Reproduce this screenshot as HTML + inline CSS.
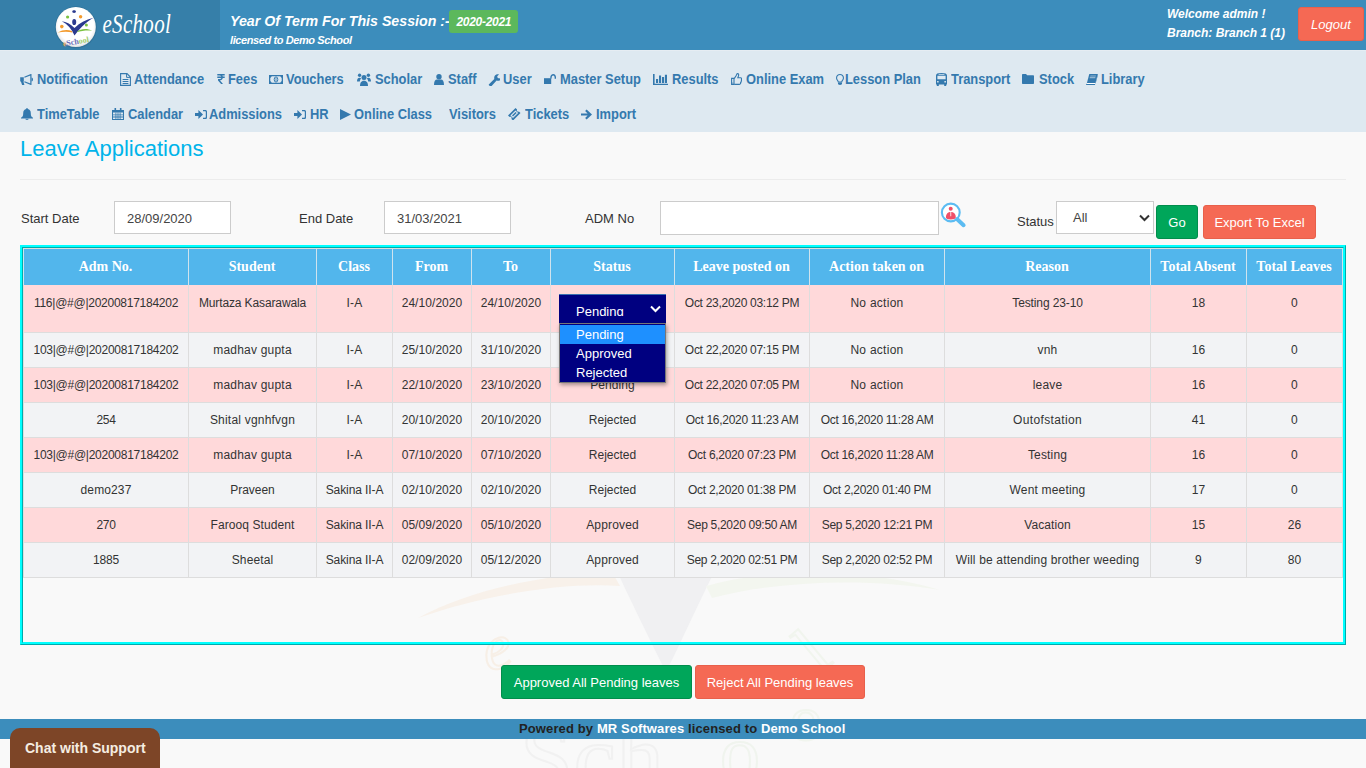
<!DOCTYPE html>
<html><head><meta charset="utf-8">
<style>
*{box-sizing:border-box;margin:0;padding:0}
html,body{width:1366px;height:768px;overflow:hidden;background:#f9f9f9;font-family:"Liberation Sans",sans-serif;color:#333}
.abs{position:absolute}
.ic{position:absolute}
.nv{position:absolute;font-size:14px;font-weight:bold;color:#3479ae;white-space:nowrap;line-height:16px;transform:scaleX(0.92);transform-origin:0 0}
.wt{position:absolute;color:#fff;font-style:italic;font-weight:bold;white-space:nowrap}
.lbl{position:absolute;font-size:13px;color:#333;white-space:nowrap;line-height:16px}
.inp{position:absolute;background:#fff;border:1px solid #ccc}
.inp span{position:absolute;font-size:13px;line-height:16px;color:#444}
.btn{position:absolute;color:#fff;font-size:13px;text-align:center;border-radius:3px;white-space:nowrap}
.hrow .th{position:absolute;top:0;height:36px;line-height:36px;background:#52b6ec;color:#fff;font-family:"Liberation Serif",serif;font-weight:bold;font-size:14px;text-align:center;white-space:nowrap}
.td{position:absolute;font-size:12px;letter-spacing:-0.2px;line-height:18px;padding-top:8px;text-align:center;white-space:nowrap;color:#333}
</style></head><body>
<div class="abs" style="left:0;top:0;width:220px;height:50px;background:#367fa9"></div>
<div class="abs" style="left:220px;top:0;width:1146px;height:50px;background:#3c8dbc"></div>
<svg class="ic" style="left:52px;top:3px;width:48px;height:48px" viewBox="0 0 48 48">
<defs><radialGradient id="lg" cx="0.5" cy="0.45" r="0.55"><stop offset="0.8" stop-color="#ffffff"/><stop offset="1" stop-color="#e4e4e4"/></radialGradient></defs>
<circle cx="23.9" cy="24.3" r="21" fill="#1f4f6e" opacity="0.25"/>
<circle cx="23.8" cy="24" r="20" fill="url(#lg)"/>
<path d="M20.3 8.3c0.4-1.3 3.2-1.3 3.6 0 0.2 0.9-0.6 1.7-1.8 1.7s-2-0.8-1.8-1.7z" fill="#2b3a8f"/>
<ellipse cx="22.2" cy="19" rx="2" ry="3.1" fill="#2b3a8f"/>
<path d="M9.8 18.2c4.5 0.5 8.5 2.5 12.7 6.8 5-5 11-8.5 19-10.3-5.5 3.2-12 8.2-19 17.8-2.7-6.6-7-11.2-12.7-14.3z" fill="#2b3a8f"/>
<circle cx="15.6" cy="14" r="1.6" fill="#7cc242"/>
<circle cx="28.6" cy="13.8" r="1.7" fill="#f39a2c"/>
<circle cx="9.8" cy="23.6" r="1.8" fill="#f39a2c"/>
<circle cx="34.4" cy="22" r="1.5" fill="#7cc242"/>
<path d="M5.8 29.6c4.5-2.8 9.5-3.2 14-1.6l0.8 1.6c-5-1.2-10-0.8-14.8 0z" fill="#f39a2c"/>
<path d="M24.5 29.2c4-3.5 10-4.2 15.8-1.6-5.5-0.6-10.5 0.1-15.8 1.6z" fill="#7cc242"/>
<text x="10.5" y="41.5" font-family="Liberation Serif" font-weight="bold" font-size="8" fill="#e8a860" transform="rotate(-10 22 38)">e<tspan fill="#6a6cb8">Sch</tspan><tspan fill="#9ccc6a">ool</tspan></text>
</svg>
<div class="abs" style="left:102.5px;top:5px;font-family:'Liberation Serif',serif;font-style:italic;font-size:21px;color:#fff;line-height:30px;white-space:nowrap;transform:scaleY(1.25);transform-origin:0 0;letter-spacing:0.3px">eSchool</div>
<div class="wt" style="left:230px;top:12px;font-size:14.2px;line-height:18px">Year Of Term For This Session :-</div>
<div class="abs" style="left:449px;top:10px;width:69px;height:23px;background:#5cb85c;border-radius:3px"></div>
<div class="wt" style="left:456.5px;top:14px;font-size:12px;line-height:16px;letter-spacing:-0.3px">2020-2021</div>
<div class="wt" style="left:230px;top:33px;font-size:11px;line-height:14px;letter-spacing:-0.4px">licensed to Demo School</div>
<div class="wt" style="left:1167px;top:5.5px;font-size:12px;line-height:16px">Welcome admin !</div>
<div class="wt" style="left:1167px;top:25px;font-size:12px;line-height:16px">Branch: Branch 1 (1)</div>
<div class="abs" style="left:1298px;top:7px;width:66px;height:34px;background:#f56954;border:1px solid #e8604b;border-radius:3px"></div>
<div class="abs" style="left:1311px;top:17px;font-size:13px;font-style:italic;color:#fff;line-height:16px">Logout</div>
<div class="abs" style="left:0;top:50px;width:1366px;height:82px;background:#dee9f1;border-top:1px solid #e6edf3"></div>
<div class="nv" style="left:37.1px;top:71px">Notification</div><svg class="ic" style="left:19.8px;top:74px;width:13px;height:11px" viewBox="0 0 13 11" fill="#3479ae"><path d="M0.2 3.2h3.6v4.4H3.4l1 3.4H2.1L0.9 7.6H0.2z"/><path d="M4.4 3.2L10.9 0.6v9.8L4.4 7.8" fill="none" stroke="#3479ae" stroke-width="1.2"/><path d="M11.5 3.5c0.9 0 1.5 0.9 1.5 2s-0.6 2-1.5 2z"/></svg><div class="nv" style="left:134.1px;top:71px">Attendance</div><svg class="ic" style="left:120px;top:73px;width:11px;height:13px" viewBox="0 0 11 13" fill="#3479ae"><path d="M0.6 0.6h6.4l3.4 3.4v8.4H0.6z" fill="none" stroke="#3479ae" stroke-width="1.1"/><path d="M6.6 0.8v3.6h3.6" fill="none" stroke="#3479ae" stroke-width="1"/><path d="M2.6 6h5.8v0.9H2.6zM2.6 8h5.8v0.9H2.6zM2.6 10h5.8v0.9H2.6z"/></svg><div class="nv" style="left:227.5px;top:71px">Fees</div><svg class="ic" style="left:216.5px;top:74px;width:8px;height:10px" viewBox="0 0 8 10" fill="#3479ae"><path d="M0.3 0h7.4v1.4H5.2c0.3 0.3 0.5 0.7 0.6 1.1h1.9v1.4H5.8C5.5 5.4 4.3 6.2 2.8 6.3L6 10H4.1L1 6.4V5.1h1.6c0.9 0 1.5-0.5 1.7-1.2H0.3V2.5h4C4 1.8 3.4 1.4 2.6 1.4H0.3z"/></svg><div class="nv" style="left:286.3px;top:71px">Vouchers</div><svg class="ic" style="left:269px;top:75px;width:14px;height:9px" viewBox="0 0 14 9" fill="#3479ae"><path d="M0 0h14v9H0z M2.8 1.3h8.4l1.5 1.7v3l-1.5 1.7H2.8L1.3 6V3z" fill-rule="evenodd"/><ellipse cx="7" cy="4.5" rx="1.8" ry="2.6" fill="none" stroke="#3479ae" stroke-width="1"/><path d="M6.6 3h0.8v3h-0.8z"/></svg><div class="nv" style="left:374.7px;top:71px">Scholar</div><svg class="ic" style="left:356.6px;top:73px;width:14px;height:13px" viewBox="0 0 14 13" fill="#3479ae"><circle cx="7" cy="4.6" r="2.5"/><circle cx="2.6" cy="2.3" r="1.7"/><circle cx="11.4" cy="2.3" r="1.7"/><path d="M3 13c0-3 1-5.3 4-5.3s4 2.3 4 5.3z"/><path d="M0 8.5c0-2.5 0.8-3.8 2.6-3.8 0.7 0 1.2 0.3 1.5 0.5C3.4 6.1 2.9 7.2 2.8 8.6z"/><path d="M14 8.5c0-2.5-0.8-3.8-2.6-3.8-0.7 0-1.2 0.3-1.5 0.5 0.7 0.9 1.2 2 1.3 3.4z"/></svg><div class="nv" style="left:447.7px;top:71px">Staff</div><svg class="ic" style="left:433.8px;top:74px;width:10px;height:11px" viewBox="0 0 10 11" fill="#3479ae"><circle cx="5" cy="2.8" r="2.7"/><path d="M0 11c0-3.6 1.3-5.4 3-5.4h4c1.7 0 3 1.8 3 5.4z"/></svg><div class="nv" style="left:503.3px;top:71px">User</div><svg class="ic" style="left:487.7px;top:74px;width:12px;height:12px" viewBox="0 0 12 12" fill="#3479ae"><path d="M1 10.2L6.3 5c-0.4-1.6 0.2-3.4 1.7-4.2 0.9-0.5 2-0.6 3-0.3L9.2 2.3l0.5 1.8 1.8 0.5 1.8-1.8c0.3 1-0.1 2.2-0.9 3-0.9 0.9-2.4 1.3-3.8 0.8L3.6 11.9c-0.7 0.5-1.7 0.4-2.3-0.3-0.6-0.4-0.7-1-0.3-1.4z"/></svg><div class="nv" style="left:559.7px;top:71px">Master Setup</div><svg class="ic" style="left:544px;top:74px;width:12px;height:10px" viewBox="0 0 12 10" fill="#3479ae"><path d="M0 4.2h7.2V10H0z"/><path d="M6.3 4.6V3.2C6.3 1.4 7.7 0 9.3 0S12 1.4 12 3.2v1.6h-1.4V3.2c0-0.9-0.6-1.8-1.4-1.8S7.7 2.3 7.7 3.2v1.4z"/></svg><div class="nv" style="left:672.2px;top:71px">Results</div><svg class="ic" style="left:653px;top:74px;width:15px;height:11px" viewBox="0 0 15 11" fill="#3479ae"><path d="M0 0h1.6v9.7H15V11H0z"/><path d="M3 4.9h2.1v4H3zM6 1.6h2.1v7.3H6zM9 3h2.1v5.9H9zM11.9 0.8h2.1v8.1h-2.1z"/></svg><div class="nv" style="left:745.7px;top:71px">Online Exam</div><svg class="ic" style="left:730.7px;top:73px;width:11px;height:12px" viewBox="0 0 11 12" fill="#3479ae"><path d="M0.6 5.4h2.4v6H0.6z" fill="none" stroke="#3479ae" stroke-width="1.1"/><path d="M3.2 5.6L5.4 2.2C5.8 1.2 5.8 0.6 6.6 0.6c1 0 1.3 1 0.9 2.2L6.8 4.8h2.8c1 0 1.3 1.1 0.8 1.7 0.4 0.5 0.2 1.3-0.3 1.6 0.3 0.6 0 1.3-0.5 1.5 0.2 0.9-0.3 1.8-1.1 1.8H3.2" fill="none" stroke="#3479ae" stroke-width="1.1"/><circle cx="1.8" cy="10" r="0.6"/></svg><div class="nv" style="left:845.2px;top:71px">Lesson Plan</div><svg class="ic" style="left:836px;top:74px;width:8px;height:11px" viewBox="0 0 8 11" fill="#3479ae"><path d="M4 0C1.8 0 0 1.7 0 3.9c0 1.9 1.5 2.8 1.9 4.5h4.2C6.5 6.7 8 5.8 8 3.9 8 1.7 6.2 0 4 0z M4 1.1c1.6 0 2.9 1.2 2.9 2.8 0 1.3-1.2 2.2-1.6 3.5H2.7C2.3 6.1 1.1 5.2 1.1 3.9 1.1 2.3 2.4 1.1 4 1.1z" fill-rule="evenodd"/><path d="M2 8.6h4v1.2c0 0.6-0.8 1.2-2 1.2s-2-0.6-2-1.2z"/></svg><div class="nv" style="left:951.2px;top:71px">Transport</div><svg class="ic" style="left:936.3px;top:73px;width:11px;height:13px" viewBox="0 0 11 13" fill="#3479ae"><path d="M0 2.6C0 0.8 1.6 0 5.5 0S11 0.8 11 2.6V11.4H0z M1.4 2.7v3.6h8.2V2.7z" fill-rule="evenodd"/><path d="M2.6 1h5.8v0.8H2.6z" fill="#cfe0ec"/><path d="M1.1 8.1h1.5v1.5H1.1zM8.4 8.1h1.5v1.5H8.4z" fill="#dee9f1"/><path d="M0.8 11h2v2h-2zM8.2 11h2v2h-2z"/></svg><div class="nv" style="left:1039.0px;top:71px">Stock</div><svg class="ic" style="left:1022.2px;top:74px;width:12px;height:10px" viewBox="0 0 12 10" fill="#3479ae"><path d="M0 1C0 0.4 0.4 0 1 0h3l1.2 1.3H11c0.6 0 1 0.4 1 1V9c0 0.6-0.4 1-1 1H1c-0.6 0-1-0.4-1-1z"/></svg><div class="nv" style="left:1101.2px;top:71px">Library</div><svg class="ic" style="left:1085.5px;top:74px;width:12px;height:11px" viewBox="0 0 12 11" fill="#3479ae"><path d="M3.3 0h8.5L9.4 9H0.9z"/><path d="M4.4 1.4h5.6l-0.3 1.2H4.1zM3.9 3.1h5.6l-0.3 1.1H3.6z" fill="#93b7d2"/><path d="M0.9 9h8.5l-0.2 0.9H0.7z" fill="#ffffff"/><path d="M0.5 9.9h8.7l-0.3 1.1H0.3zM9.4 9L11.8 0l0.2 0.7-2.5 9.3z M0.9 9L0.3 11 0 10.4z"/></svg><div class="nv" style="left:37.0px;top:106px">TimeTable</div><svg class="ic" style="left:20.6px;top:108px;width:12px;height:12px" viewBox="0 0 12 12" fill="#3479ae"><path d="M6 0c0.5 0 0.8 0.3 0.8 0.8v0.3C8.8 1.5 9.8 3 9.8 5.2c0 2.8 0.6 3.5 2.2 4.6v0.7H0V9.8c1.6-1.1 2.2-1.8 2.2-4.6 0-2.2 1-3.7 3-4.1V0.8C5.2 0.3 5.5 0 6 0z"/><path d="M4.3 10.8h3.4c0 0.7-0.8 1.2-1.7 1.2s-1.7-0.5-1.7-1.2z"/></svg><div class="nv" style="left:127.5px;top:106px">Calendar</div><svg class="ic" style="left:112px;top:108.4px;width:12px;height:12px" viewBox="0 0 12 12" fill="#3479ae"><path d="M0 2h12v10H0z M1 4.6v6.4h10V4.6z" fill-rule="evenodd"/><path d="M2.5 0h1.6v3H2.5zM7.9 0h1.6v3H7.9z"/><path d="M3.5 4.6h0.8v6.4H3.5zM5.6 4.6h0.8v6.4H5.6zM7.7 4.6h0.8v6.4H7.7zM1 6.5h10v0.8H1zM1 8.6h10v0.8H1z"/></svg><div class="nv" style="left:209.4px;top:106px">Admissions</div><svg class="ic" style="left:195px;top:110.3px;width:12px;height:9px" viewBox="0 0 12 9" fill="#3479ae"><path d="M0 2.9h3.4V0L8 4.5 3.4 9V6.1H0z"/><path d="M8 0h2.4C11.3 0 12 0.7 12 1.6v5.8c0 0.9-0.7 1.6-1.6 1.6H8V7.7h2.2c0.4 0 0.6-0.3 0.6-0.7V2c0-0.4-0.2-0.7-0.6-0.7H8z"/></svg><div class="nv" style="left:309.7px;top:106px">HR</div><svg class="ic" style="left:294.4px;top:110px;width:12px;height:9px" viewBox="0 0 12 9" fill="#3479ae"><path d="M0 2.9h3.4V0L8 4.5 3.4 9V6.1H0z"/><path d="M8 0h2.4C11.3 0 12 0.7 12 1.6v5.8c0 0.9-0.7 1.6-1.6 1.6H8V7.7h2.2c0.4 0 0.6-0.3 0.6-0.7V2c0-0.4-0.2-0.7-0.6-0.7H8z"/></svg><div class="nv" style="left:354.4px;top:106px">Online Class</div><svg class="ic" style="left:340.2px;top:109px;width:11px;height:11px" viewBox="0 0 11 11" fill="#3479ae"><path d="M0 0L11 5.5 0 11z"/></svg><div class="nv" style="left:448.7px;top:106px">Visitors</div><div class="nv" style="left:524.6px;top:106px">Tickets</div><svg class="ic" style="left:508px;top:108px;width:13px;height:12px" viewBox="0 0 13 12" fill="#3479ae"><path d="M0 7.5L7.5 0l1.6 1.6c-0.4 0.5-0.4 1.2 0.1 1.7s1.2 0.5 1.7 0.1L12.5 5 5 12.5 3.4 10.9c0.4-0.5 0.4-1.2-0.1-1.7s-1.2-0.5-1.7-0.1z M2.4 7.5L5 10.1 10.1 5 7.5 2.4z" fill-rule="evenodd"/><path d="M4 7.5L7.5 4 8.6 5 5 8.6z"/></svg><div class="nv" style="left:595.7px;top:106px">Import</div><svg class="ic" style="left:580.9px;top:109.1px;width:11px;height:11px" viewBox="0 0 11 11" fill="#3479ae"><path d="M0 4.4h6.6L4.1 1.9 5.6 0.5 11 5.5 5.6 10.5 4.1 9.1 6.6 6.6H0z"/></svg>
<div class="abs" style="left:20px;top:136px;font-size:22px;color:#00b4ea;line-height:26px;white-space:nowrap">Leave Applications</div>
<div class="abs" style="left:20px;top:179px;width:1326px;height:1px;background:#ececec"></div>
<div class="lbl" style="left:21px;top:211px">Start Date</div>
<div class="inp" style="left:114px;top:201px;width:117px;height:33px"><span style="left:12px;top:9px">28/09/2020</span></div>
<div class="lbl" style="left:299px;top:211px">End Date</div>
<div class="inp" style="left:384px;top:201px;width:127px;height:33px"><span style="left:12px;top:9px">31/03/2021</span></div>
<div class="lbl" style="left:585px;top:211px">ADM No</div>
<div class="inp" style="left:660px;top:201px;width:279px;height:34px"></div>
<svg class="ic" style="left:940px;top:202px;width:27px;height:27px" viewBox="0 0 27 27">
<circle cx="10.8" cy="10.5" r="8.9" fill="#fff" stroke="#5cbcf2" stroke-width="2.1"/>
<path d="M17.2 17.2L23.6 23.2" stroke="#5cbcf2" stroke-width="4" stroke-linecap="round"/>
<circle cx="10.7" cy="6.8" r="2" fill="#f05068"/>
<path d="M5.9 15.5C5.9 11.8 8 10 10.8 10S15.8 11.8 15.8 15.5C15.8 16.8 13.5 17.4 10.8 17.4S5.9 16.8 5.9 15.5z" fill="#f05068"/>
<path d="M10.4 10h0.8v4.2h-0.8z" fill="#fff"/>
</svg>
<div class="lbl" style="left:1017px;top:214px">Status</div>
<div class="inp" style="left:1056px;top:201px;width:98px;height:33px"><span style="left:16px;top:8px">All</span>
<svg style="position:absolute;left:82px;top:12px;width:11px;height:8px" viewBox="0 0 11 8"><path d="M1 1.5l4.5 4.5 4.5-4.5" fill="none" stroke="#333" stroke-width="2"/></svg></div>
<div class="btn" style="left:1156px;top:205px;width:42px;height:34px;line-height:34px;background:#00a65a;border:1px solid #008d4c">Go</div>
<div class="btn" style="left:1203px;top:205px;width:113px;height:34px;line-height:33px;background:#f56954;border:1px solid #e8604b">Export To Excel</div>
<svg class="ic" style="left:380px;top:560px;width:620px;height:208px" viewBox="380 560 620 208">
<path d="M612 560C630 600 650 640 666 672 682 640 700 600 720 560z" fill="#f0f0f2"/>
<path d="M418 618C470 590 540 575 612 572L620 586C560 582 480 596 418 618z" fill="#f8f1ea"/>
<path d="M706 586C760 570 860 566 940 590 870 578 780 580 712 598z" fill="#f3f6ef"/>
<text x="485" y="668" font-family="Liberation Serif" font-style="italic" font-size="64" fill="none" stroke="#f7efe6" stroke-width="2" transform="rotate(-12 500 660)">e</text>
<text x="800" y="660" font-family="Liberation Serif" font-size="70" fill="none" stroke="#f1f5ee" stroke-width="2" transform="rotate(-40 830 640)">l</text>
<text x="520" y="790" font-family="Liberation Serif" font-size="96" fill="none" stroke="#f1f1f1" stroke-width="2">Sch</text>
<text x="720" y="780" font-family="Liberation Serif" font-size="80" fill="none" stroke="#f0f4ee" stroke-width="2">o</text>
<text x="790" y="740" font-family="Liberation Serif" font-size="64" fill="none" stroke="#f1f5ee" stroke-width="2">o</text>
</svg>
<div class="abs" style="left:20px;top:245px;width:1326px;height:400px;border:3px ridge #00ffff"></div>
<div class="abs" style="left:23px;top:248px;width:1320px;height:1px;background:#ddd"></div><div class="abs hrow" style="left:0;top:249px;width:1366px;height:36px"><div class="th" style="left:23px;width:165px">Adm No.</div><div class="th" style="left:188px;width:128px">Student</div><div class="th" style="left:316px;width:76px">Class</div><div class="th" style="left:392px;width:79px">From</div><div class="th" style="left:471px;width:79px">To</div><div class="th" style="left:550px;width:124px">Status</div><div class="th" style="left:674px;width:135px">Leave posted on</div><div class="th" style="left:809px;width:135px">Action taken on</div><div class="th" style="left:944px;width:206px">Reason</div><div class="th" style="left:1150px;width:96px">Total Absent</div><div class="th" style="left:1246px;width:96px">Total Leaves</div></div><div class="abs" style="left:24px;top:285px;width:1318px;height:47px;background:#ffd9da"></div><div class="td" style="left:24px;top:286px;width:164px;letter-spacing:-0.26px">116|@#@|20200817184202</div><div class="td" style="left:189px;top:286px;width:127px;letter-spacing:-0.12px">Murtaza Kasarawala</div><div class="td" style="left:317px;top:286px;width:75px;letter-spacing:0.15px">I-A</div><div class="td" style="left:393px;top:286px;width:78px;letter-spacing:0.06px">24/10/2020</div><div class="td" style="left:472px;top:286px;width:78px;letter-spacing:0.06px">24/10/2020</div><div class="td" style="left:551px;top:286px;width:123px;letter-spacing:0.1px"></div><div class="td" style="left:675px;top:286px;width:134px;letter-spacing:-0.29px">Oct 23,2020 03:12 PM</div><div class="td" style="left:810px;top:286px;width:134px;letter-spacing:0.27px">No action</div><div class="td" style="left:945px;top:286px;width:205px;letter-spacing:-0.12px">Testing 23-10</div><div class="td" style="left:1151px;top:286px;width:95px;letter-spacing:0.1px">18</div><div class="td" style="left:1247px;top:286px;width:95px;letter-spacing:0.1px">0</div><div class="abs" style="left:23px;top:332px;width:1320px;height:1px;background:#ddd"></div><div class="abs" style="left:24px;top:333px;width:1318px;height:34px;background:#f2f3f5"></div><div class="td" style="left:24px;top:333px;width:164px;letter-spacing:-0.26px">103|@#@|20200817184202</div><div class="td" style="left:189px;top:333px;width:127px;letter-spacing:0.21px">madhav gupta</div><div class="td" style="left:317px;top:333px;width:75px;letter-spacing:0.15px">I-A</div><div class="td" style="left:393px;top:333px;width:78px;letter-spacing:0.06px">25/10/2020</div><div class="td" style="left:472px;top:333px;width:78px;letter-spacing:0.06px">31/10/2020</div><div class="td" style="left:551px;top:333px;width:123px;letter-spacing:0.1px">Pending</div><div class="td" style="left:675px;top:333px;width:134px;letter-spacing:-0.29px">Oct 22,2020 07:15 PM</div><div class="td" style="left:810px;top:333px;width:134px;letter-spacing:0.27px">No action</div><div class="td" style="left:945px;top:333px;width:205px;letter-spacing:0.15px">vnh</div><div class="td" style="left:1151px;top:333px;width:95px;letter-spacing:0.1px">16</div><div class="td" style="left:1247px;top:333px;width:95px;letter-spacing:0.1px">0</div><div class="abs" style="left:23px;top:367px;width:1320px;height:1px;background:#ddd"></div><div class="abs" style="left:24px;top:368px;width:1318px;height:34px;background:#ffd9da"></div><div class="td" style="left:24px;top:368px;width:164px;letter-spacing:-0.26px">103|@#@|20200817184202</div><div class="td" style="left:189px;top:368px;width:127px;letter-spacing:0.21px">madhav gupta</div><div class="td" style="left:317px;top:368px;width:75px;letter-spacing:0.15px">I-A</div><div class="td" style="left:393px;top:368px;width:78px;letter-spacing:0.06px">22/10/2020</div><div class="td" style="left:472px;top:368px;width:78px;letter-spacing:0.06px">23/10/2020</div><div class="td" style="left:551px;top:368px;width:123px;letter-spacing:0.1px">Pending</div><div class="td" style="left:675px;top:368px;width:134px;letter-spacing:-0.29px">Oct 22,2020 07:05 PM</div><div class="td" style="left:810px;top:368px;width:134px;letter-spacing:0.27px">No action</div><div class="td" style="left:945px;top:368px;width:205px;letter-spacing:0.15px">leave</div><div class="td" style="left:1151px;top:368px;width:95px;letter-spacing:0.1px">16</div><div class="td" style="left:1247px;top:368px;width:95px;letter-spacing:0.1px">0</div><div class="abs" style="left:23px;top:402px;width:1320px;height:1px;background:#ddd"></div><div class="abs" style="left:24px;top:403px;width:1318px;height:34px;background:#f2f3f5"></div><div class="td" style="left:24px;top:403px;width:164px;letter-spacing:-0.3px">254</div><div class="td" style="left:189px;top:403px;width:127px;letter-spacing:0.21px">Shital vgnhfvgn</div><div class="td" style="left:317px;top:403px;width:75px;letter-spacing:0.15px">I-A</div><div class="td" style="left:393px;top:403px;width:78px;letter-spacing:0.06px">20/10/2020</div><div class="td" style="left:472px;top:403px;width:78px;letter-spacing:0.06px">20/10/2020</div><div class="td" style="left:551px;top:403px;width:123px;letter-spacing:0.01px">Rejected</div><div class="td" style="left:675px;top:403px;width:134px;letter-spacing:-0.29px">Oct 16,2020 11:23 AM</div><div class="td" style="left:810px;top:403px;width:134px;letter-spacing:-0.29px">Oct 16,2020 11:28 AM</div><div class="td" style="left:945px;top:403px;width:205px;letter-spacing:0.36px">Outofstation</div><div class="td" style="left:1151px;top:403px;width:95px;letter-spacing:0.1px">41</div><div class="td" style="left:1247px;top:403px;width:95px;letter-spacing:0.1px">0</div><div class="abs" style="left:23px;top:437px;width:1320px;height:1px;background:#ddd"></div><div class="abs" style="left:24px;top:438px;width:1318px;height:34px;background:#ffd9da"></div><div class="td" style="left:24px;top:438px;width:164px;letter-spacing:-0.26px">103|@#@|20200817184202</div><div class="td" style="left:189px;top:438px;width:127px;letter-spacing:0.21px">madhav gupta</div><div class="td" style="left:317px;top:438px;width:75px;letter-spacing:0.15px">I-A</div><div class="td" style="left:393px;top:438px;width:78px;letter-spacing:0.06px">07/10/2020</div><div class="td" style="left:472px;top:438px;width:78px;letter-spacing:0.06px">07/10/2020</div><div class="td" style="left:551px;top:438px;width:123px;letter-spacing:0.01px">Rejected</div><div class="td" style="left:675px;top:438px;width:134px;letter-spacing:-0.29px">Oct 6,2020 07:23 PM</div><div class="td" style="left:810px;top:438px;width:134px;letter-spacing:-0.29px">Oct 16,2020 11:28 AM</div><div class="td" style="left:945px;top:438px;width:205px;letter-spacing:0.17px">Testing</div><div class="td" style="left:1151px;top:438px;width:95px;letter-spacing:0.1px">16</div><div class="td" style="left:1247px;top:438px;width:95px;letter-spacing:0.1px">0</div><div class="abs" style="left:23px;top:472px;width:1320px;height:1px;background:#ddd"></div><div class="abs" style="left:24px;top:473px;width:1318px;height:34px;background:#f2f3f5"></div><div class="td" style="left:24px;top:473px;width:164px;letter-spacing:0.12px">demo237</div><div class="td" style="left:189px;top:473px;width:127px;letter-spacing:-0.03px">Praveen</div><div class="td" style="left:317px;top:473px;width:75px;letter-spacing:-0.1px">Sakina II-A</div><div class="td" style="left:393px;top:473px;width:78px;letter-spacing:0.06px">02/10/2020</div><div class="td" style="left:472px;top:473px;width:78px;letter-spacing:0.06px">02/10/2020</div><div class="td" style="left:551px;top:473px;width:123px;letter-spacing:0.01px">Rejected</div><div class="td" style="left:675px;top:473px;width:134px;letter-spacing:-0.29px">Oct 2,2020 01:38 PM</div><div class="td" style="left:810px;top:473px;width:134px;letter-spacing:-0.29px">Oct 2,2020 01:40 PM</div><div class="td" style="left:945px;top:473px;width:205px;letter-spacing:0.18px">Went meeting</div><div class="td" style="left:1151px;top:473px;width:95px;letter-spacing:0.1px">17</div><div class="td" style="left:1247px;top:473px;width:95px;letter-spacing:0.1px">0</div><div class="abs" style="left:23px;top:507px;width:1320px;height:1px;background:#ddd"></div><div class="abs" style="left:24px;top:508px;width:1318px;height:34px;background:#ffd9da"></div><div class="td" style="left:24px;top:508px;width:164px;letter-spacing:-0.3px">270</div><div class="td" style="left:189px;top:508px;width:127px;letter-spacing:0.08px">Farooq Student</div><div class="td" style="left:317px;top:508px;width:75px;letter-spacing:-0.1px">Sakina II-A</div><div class="td" style="left:393px;top:508px;width:78px;letter-spacing:0.06px">05/09/2020</div><div class="td" style="left:472px;top:508px;width:78px;letter-spacing:0.06px">05/10/2020</div><div class="td" style="left:551px;top:508px;width:123px;letter-spacing:0.17px">Approved</div><div class="td" style="left:675px;top:508px;width:134px;letter-spacing:-0.29px">Sep 5,2020 09:50 AM</div><div class="td" style="left:810px;top:508px;width:134px;letter-spacing:-0.29px">Sep 5,2020 12:21 PM</div><div class="td" style="left:945px;top:508px;width:205px;letter-spacing:0.07px">Vacation</div><div class="td" style="left:1151px;top:508px;width:95px;letter-spacing:0.1px">15</div><div class="td" style="left:1247px;top:508px;width:95px;letter-spacing:0.1px">26</div><div class="abs" style="left:23px;top:542px;width:1320px;height:1px;background:#ddd"></div><div class="abs" style="left:24px;top:543px;width:1318px;height:34px;background:#f2f3f5"></div><div class="td" style="left:24px;top:543px;width:164px;letter-spacing:-0.17px">1885</div><div class="td" style="left:189px;top:543px;width:127px;letter-spacing:0.13px">Sheetal</div><div class="td" style="left:317px;top:543px;width:75px;letter-spacing:-0.1px">Sakina II-A</div><div class="td" style="left:393px;top:543px;width:78px;letter-spacing:0.06px">02/09/2020</div><div class="td" style="left:472px;top:543px;width:78px;letter-spacing:0.06px">05/12/2020</div><div class="td" style="left:551px;top:543px;width:123px;letter-spacing:0.17px">Approved</div><div class="td" style="left:675px;top:543px;width:134px;letter-spacing:-0.29px">Sep 2,2020 02:51 PM</div><div class="td" style="left:810px;top:543px;width:134px;letter-spacing:-0.29px">Sep 2,2020 02:52 PM</div><div class="td" style="left:945px;top:543px;width:205px;letter-spacing:0.17px">Will be attending brother weeding</div><div class="td" style="left:1151px;top:543px;width:95px;letter-spacing:0.1px">9</div><div class="td" style="left:1247px;top:543px;width:95px;letter-spacing:0.1px">80</div><div class="abs" style="left:23px;top:577px;width:1320px;height:1px;background:#ddd"></div><div class="abs" style="left:23px;top:285px;width:1px;height:293px;background:#ddd"></div><div class="abs" style="left:23px;top:249px;width:1px;height:36px;background:#cfe3ee"></div><div class="abs" style="left:188px;top:285px;width:1px;height:293px;background:#ddd"></div><div class="abs" style="left:188px;top:249px;width:1px;height:36px;background:#cfe3ee"></div><div class="abs" style="left:316px;top:285px;width:1px;height:293px;background:#ddd"></div><div class="abs" style="left:316px;top:249px;width:1px;height:36px;background:#cfe3ee"></div><div class="abs" style="left:392px;top:285px;width:1px;height:293px;background:#ddd"></div><div class="abs" style="left:392px;top:249px;width:1px;height:36px;background:#cfe3ee"></div><div class="abs" style="left:471px;top:285px;width:1px;height:293px;background:#ddd"></div><div class="abs" style="left:471px;top:249px;width:1px;height:36px;background:#cfe3ee"></div><div class="abs" style="left:550px;top:285px;width:1px;height:293px;background:#ddd"></div><div class="abs" style="left:550px;top:249px;width:1px;height:36px;background:#cfe3ee"></div><div class="abs" style="left:674px;top:285px;width:1px;height:293px;background:#ddd"></div><div class="abs" style="left:674px;top:249px;width:1px;height:36px;background:#cfe3ee"></div><div class="abs" style="left:809px;top:285px;width:1px;height:293px;background:#ddd"></div><div class="abs" style="left:809px;top:249px;width:1px;height:36px;background:#cfe3ee"></div><div class="abs" style="left:944px;top:285px;width:1px;height:293px;background:#ddd"></div><div class="abs" style="left:944px;top:249px;width:1px;height:36px;background:#cfe3ee"></div><div class="abs" style="left:1150px;top:285px;width:1px;height:293px;background:#ddd"></div><div class="abs" style="left:1150px;top:249px;width:1px;height:36px;background:#cfe3ee"></div><div class="abs" style="left:1246px;top:285px;width:1px;height:293px;background:#ddd"></div><div class="abs" style="left:1246px;top:249px;width:1px;height:36px;background:#cfe3ee"></div><div class="abs" style="left:1342px;top:285px;width:1px;height:293px;background:#ddd"></div><div class="abs" style="left:1342px;top:249px;width:1px;height:36px;background:#cfe3ee"></div>
<div class="abs" style="left:559px;top:294px;width:107px;height:30px;background:#000080;border-top:1px solid #3c70b0"></div>
<div class="abs" style="left:576px;top:303px;height:13px;overflow:hidden;font-size:13px;line-height:18px;color:#fff">Pending</div>
<svg class="ic" style="left:650px;top:305px;width:11px;height:8px" viewBox="0 0 11 8"><path d="M1 1.5l4.5 4.5 4.5-4.5" fill="none" stroke="#fff" stroke-width="2"/></svg>
<div class="abs" style="left:559px;top:323px;width:107px;height:60px;background:#000080;border:1px solid #777;box-shadow:1px 2px 4px rgba(0,0,0,0.35)"></div>
<div class="abs" style="left:560px;top:325px;width:105px;height:19px;background:#1e90ff"></div>
<div class="abs" style="left:576px;top:327px;font-size:13px;line-height:16px;color:#fff">Pending</div>
<div class="abs" style="left:576px;top:346px;font-size:13px;line-height:16px;color:#fff">Approved</div>
<div class="abs" style="left:576px;top:365px;font-size:13px;line-height:16px;color:#fff">Rejected</div>
<div class="btn" style="left:501px;top:665px;width:191px;height:34px;line-height:33px;background:#00a65a;border:1px solid #008d4c">Approved All Pending leaves</div>
<div class="btn" style="left:695px;top:665px;width:170px;height:34px;line-height:33px;background:#f56954;border:1px solid #e8604b">Reject All Pending leaves</div>
<div class="abs" style="left:0;top:719px;width:1366px;height:20px;background:#3c8dbc"></div>
<div class="abs" style="left:519px;top:721px;font-size:13px;font-weight:bold;line-height:16px;color:#222;white-space:nowrap;letter-spacing:0.12px">Powered by <span style="color:#fff">MR Softwares</span> licensed to <span style="color:#fff">Demo School</span></div>
<div class="abs" style="left:10px;top:728px;width:150px;height:40px;background:#7d4527;border-radius:10px 10px 0 0"></div>
<div class="abs" style="left:25px;top:740px;font-size:14px;font-weight:bold;line-height:16px;color:#f5ede2;white-space:nowrap">Chat with Support</div>
</body></html>
